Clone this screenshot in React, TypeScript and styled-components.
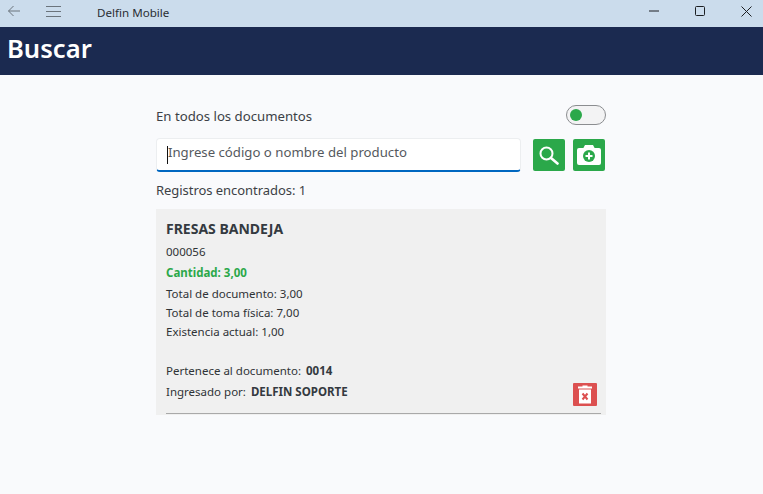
import React from "react";
import styled, { createGlobalStyle } from "styled-components";

const GlobalStyle = createGlobalStyle`
  html, body {
    margin: 0;
    padding: 0;
    height: 100%;
    overflow: hidden;
    background: #f9fafc;
    font-family: "Noto Sans", "Open Sans", sans-serif;
  }
`;

const Window = styled.div`
  width: 763px;
  height: 494px;
  overflow: hidden;
  display: flex;
  flex-direction: column;
  background: #f9fafc;
`;

const TitleBar = styled.div`
  height: 27px;
  flex-shrink: 0;
  box-sizing: border-box;
  padding-bottom: 5px;
  display: flex;
  align-items: center;
  background: #cbdcec;
`;

const TitleIcon = styled.svg`
  display: block;
  flex-shrink: 0;
  fill: none;
  stroke: #6b747c;
  stroke-width: 1;
`;

const BackSlot = styled.div`
  width: 46px;
  padding-left: 7px;
  box-sizing: border-box;
  display: flex;
`;

const MenuSlot = styled.div`
  width: 51px;
  display: flex;
`;

const AppName = styled.span`
  flex: 1;
  margin-top: 2px;
  font-size: 11.6px;
  color: #2a2e33;
`;

const WindowControls = styled.div`
  display: flex;
  flex-shrink: 0;
  margin-right: -6px;
`;

const WindowButton = styled.div`
  width: 46px;
  height: 22px;
  display: flex;
  align-items: center;
  justify-content: center;
`;

const WindowGlyph = styled.svg`
  display: block;
  fill: none;
  stroke: #1c1f22;
  stroke-width: 1;
`;

const Header = styled.header`
  height: 48px;
  flex-shrink: 0;
  display: flex;
  align-items: center;
  padding-left: 7px;
  background: #1b2a50;
`;

const HeaderTitle = styled.h1`
  margin: 0 0 5px;
  font-size: 25.6px;
  font-weight: 600;
  color: #ffffff;
`;

const Content = styled.main`
  width: 450px;
  margin-left: 156px;
  padding-top: 30px;
`;

const ToggleRow = styled.div`
  height: 20px;
  display: flex;
  align-items: center;
  justify-content: space-between;
`;

const BodyText = styled.span`
  margin-top: 2px;
  font-size: 13.2px;
  color: #3c4146;
`;

const Toggle = styled.div`
  width: 40px;
  height: 20px;
  box-sizing: border-box;
  display: flex;
  align-items: center;
  padding-left: 3px;
  border: 1px solid #8b8d90;
  border-radius: 10px;
  background: #f3f3f4;
`;

const ToggleKnob = styled.div`
  width: 12px;
  height: 12px;
  border-radius: 50%;
  background: #2ba84a;
`;

const SearchRow = styled.div`
  display: flex;
  align-items: center;
  gap: 8px;
  margin-top: 13px;
`;

const SearchBox = styled.div`
  width: 365px;
  height: 34px;
  flex-shrink: 0;
  box-sizing: border-box;
  display: flex;
  align-items: center;
  padding-left: 10px;
  margin-right: 4px;
  background: #ffffff;
  border: 1px solid #eceef0;
  border-bottom: 2px solid #0067c0;
  border-radius: 4px;
`;

const Caret = styled.div`
  width: 1px;
  height: 18px;
  flex-shrink: 0;
  background: #111111;
`;

const Placeholder = styled.span`
  margin-bottom: 6px;
  font-size: 13.2px;
  color: #55595e;
`;

const ActionButton = styled.button`
  width: 32px;
  height: 32px;
  flex-shrink: 0;
  padding: 0;
  display: flex;
  align-items: center;
  justify-content: center;
  border: none;
  border-radius: 2px;
  background: #2ba84a;
`;

const ResultCount = styled.div`
  margin-top: 9px;
  height: 19px;
  line-height: 19px;
  font-size: 13px;
  letter-spacing: -0.05px;
  color: #3c4146;
`;

const Card = styled.article`
  margin-top: 9px;
  height: 206px;
  box-sizing: border-box;
  padding: 10px 5px 0 10px;
  display: flex;
  flex-direction: column;
  background: #f0f0f0;
`;

const ProductName = styled.h2`
  margin: 0;
  height: 20px;
  line-height: 20px;
  font-size: 14px;
  font-weight: 700;
  color: #343a40;
`;

const Line = styled.div<{ $gap?: number }>`
  margin-top: ${(p) => p.$gap ?? 0}px;
  height: 19px;
  line-height: 19px;
  font-size: 11.5px;
  color: #2f3336;
`;

const Quantity = styled(Line)`
  font-weight: 700;
  color: #2ba84a;
`;

const Strong = styled.strong`
  margin-left: 5px;
  font-weight: 700;
  color: #343a40;
`;

const CardFooter = styled.div`
  margin-top: 8px;
  display: flex;
  align-items: flex-end;
  justify-content: space-between;
  padding-right: 4px;
`;

const DeleteButton = styled.button`
  width: 24px;
  height: 23px;
  padding: 0;
  margin-bottom: -5px;
  display: flex;
  align-items: center;
  justify-content: center;
  border: none;
  border-radius: 1px;
  background: #dc5050;
`;

const CardRule = styled.div`
  margin-top: auto;
  margin-bottom: 1px;
  height: 1px;
  background: #a9a9a9;
`;

const SearchIcon = () => (
  <svg width="20" height="19" viewBox="0 0 20 19" fill="none" stroke="#fff">
    <circle cx="7.5" cy="7.5" r="6" strokeWidth="2" />
    <path d="M12 12l6.5 5.5" strokeWidth="2.6" strokeLinecap="round" />
  </svg>
);

const CameraIcon = () => (
  <svg width="24" height="22" viewBox="0 0 24 22">
    <path
      fill="#fff"
      d="M8 1h8l1.6 3H22a2 2 0 0 1 2 2v13a2 2 0 0 1-2 2H2a2 2 0 0 1-2-2V6a2 2 0 0 1 2-2h4.4z"
    />
    <circle cx="12" cy="12" r="6" fill="#2ba84a" />
    <path fill="#fff" d="M11 8.5h2V11h2.5v2H13v2.5h-2V13H8.5v-2H11z" />
  </svg>
);

const TrashIcon = () => (
  <svg width="16" height="19" viewBox="0 0 16 19">
    <path fill="#fff" d="M1 1.5h4.5V0.5h5v1H15v2H1zM2 4.5h12V18.5H2z" />
    <path d="M5.5 8.5l5 6M10.5 8.5l-5 6" stroke="#dc5050" strokeWidth="2" />
  </svg>
);

export default function App() {
  return (
    <Window>
      <GlobalStyle />
      <TitleBar>
        <BackSlot>
          <TitleIcon width="14" height="12" viewBox="0 0 14 12">
            <path d="M13 6H1.5M6.5 1L1.5 6l5 5" />
          </TitleIcon>
        </BackSlot>
        <MenuSlot>
          <TitleIcon width="15" height="11" viewBox="0 0 15 11">
            <path d="M0 0.5h15M0 5.5h15M0 10.5h15" />
          </TitleIcon>
        </MenuSlot>
        <AppName>Delfin Mobile</AppName>
        <WindowControls>
          <WindowButton>
            <WindowGlyph width="10" height="2" viewBox="0 0 10 2">
              <path d="M0 1h10" />
            </WindowGlyph>
          </WindowButton>
          <WindowButton>
            <WindowGlyph width="10" height="10" viewBox="0 0 10 10">
              <rect x="0.5" y="0.5" width="9" height="9" rx="1" />
            </WindowGlyph>
          </WindowButton>
          <WindowButton>
            <WindowGlyph width="11" height="11" viewBox="0 0 11 11">
              <path d="M0.5 0.5l10 10M10.5 0.5l-10 10" />
            </WindowGlyph>
          </WindowButton>
        </WindowControls>
      </TitleBar>

      <Header>
        <HeaderTitle>Buscar</HeaderTitle>
      </Header>

      <Content>
        <ToggleRow>
          <BodyText>En todos los documentos</BodyText>
          <Toggle>
            <ToggleKnob />
          </Toggle>
        </ToggleRow>

        <SearchRow>
          <SearchBox>
            <Caret />
            <Placeholder>Ingrese código o nombre del producto</Placeholder>
          </SearchBox>
          <ActionButton>
            <SearchIcon />
          </ActionButton>
          <ActionButton>
            <CameraIcon />
          </ActionButton>
        </SearchRow>

        <ResultCount>Registros encontrados: 1</ResultCount>

        <Card>
          <ProductName>FRESAS BANDEJA</ProductName>
          <Line $gap={3}>000056</Line>
          <Quantity $gap={2}>Cantidad: 3,00</Quantity>
          <Line $gap={2}>Total de documento: 3,00</Line>
          <Line>Total de toma física: 7,00</Line>
          <Line>Existencia actual: 1,00</Line>
          <CardFooter>
            <div>
              <Line $gap={12}>
                Pertenece al documento:<Strong>0014</Strong>
              </Line>
              <Line $gap={2}>
                Ingresado por:<Strong>DELFIN SOPORTE</Strong>
              </Line>
            </div>
            <DeleteButton>
              <TrashIcon />
            </DeleteButton>
          </CardFooter>
          <CardRule />
        </Card>
      </Content>
    </Window>
  );
}
